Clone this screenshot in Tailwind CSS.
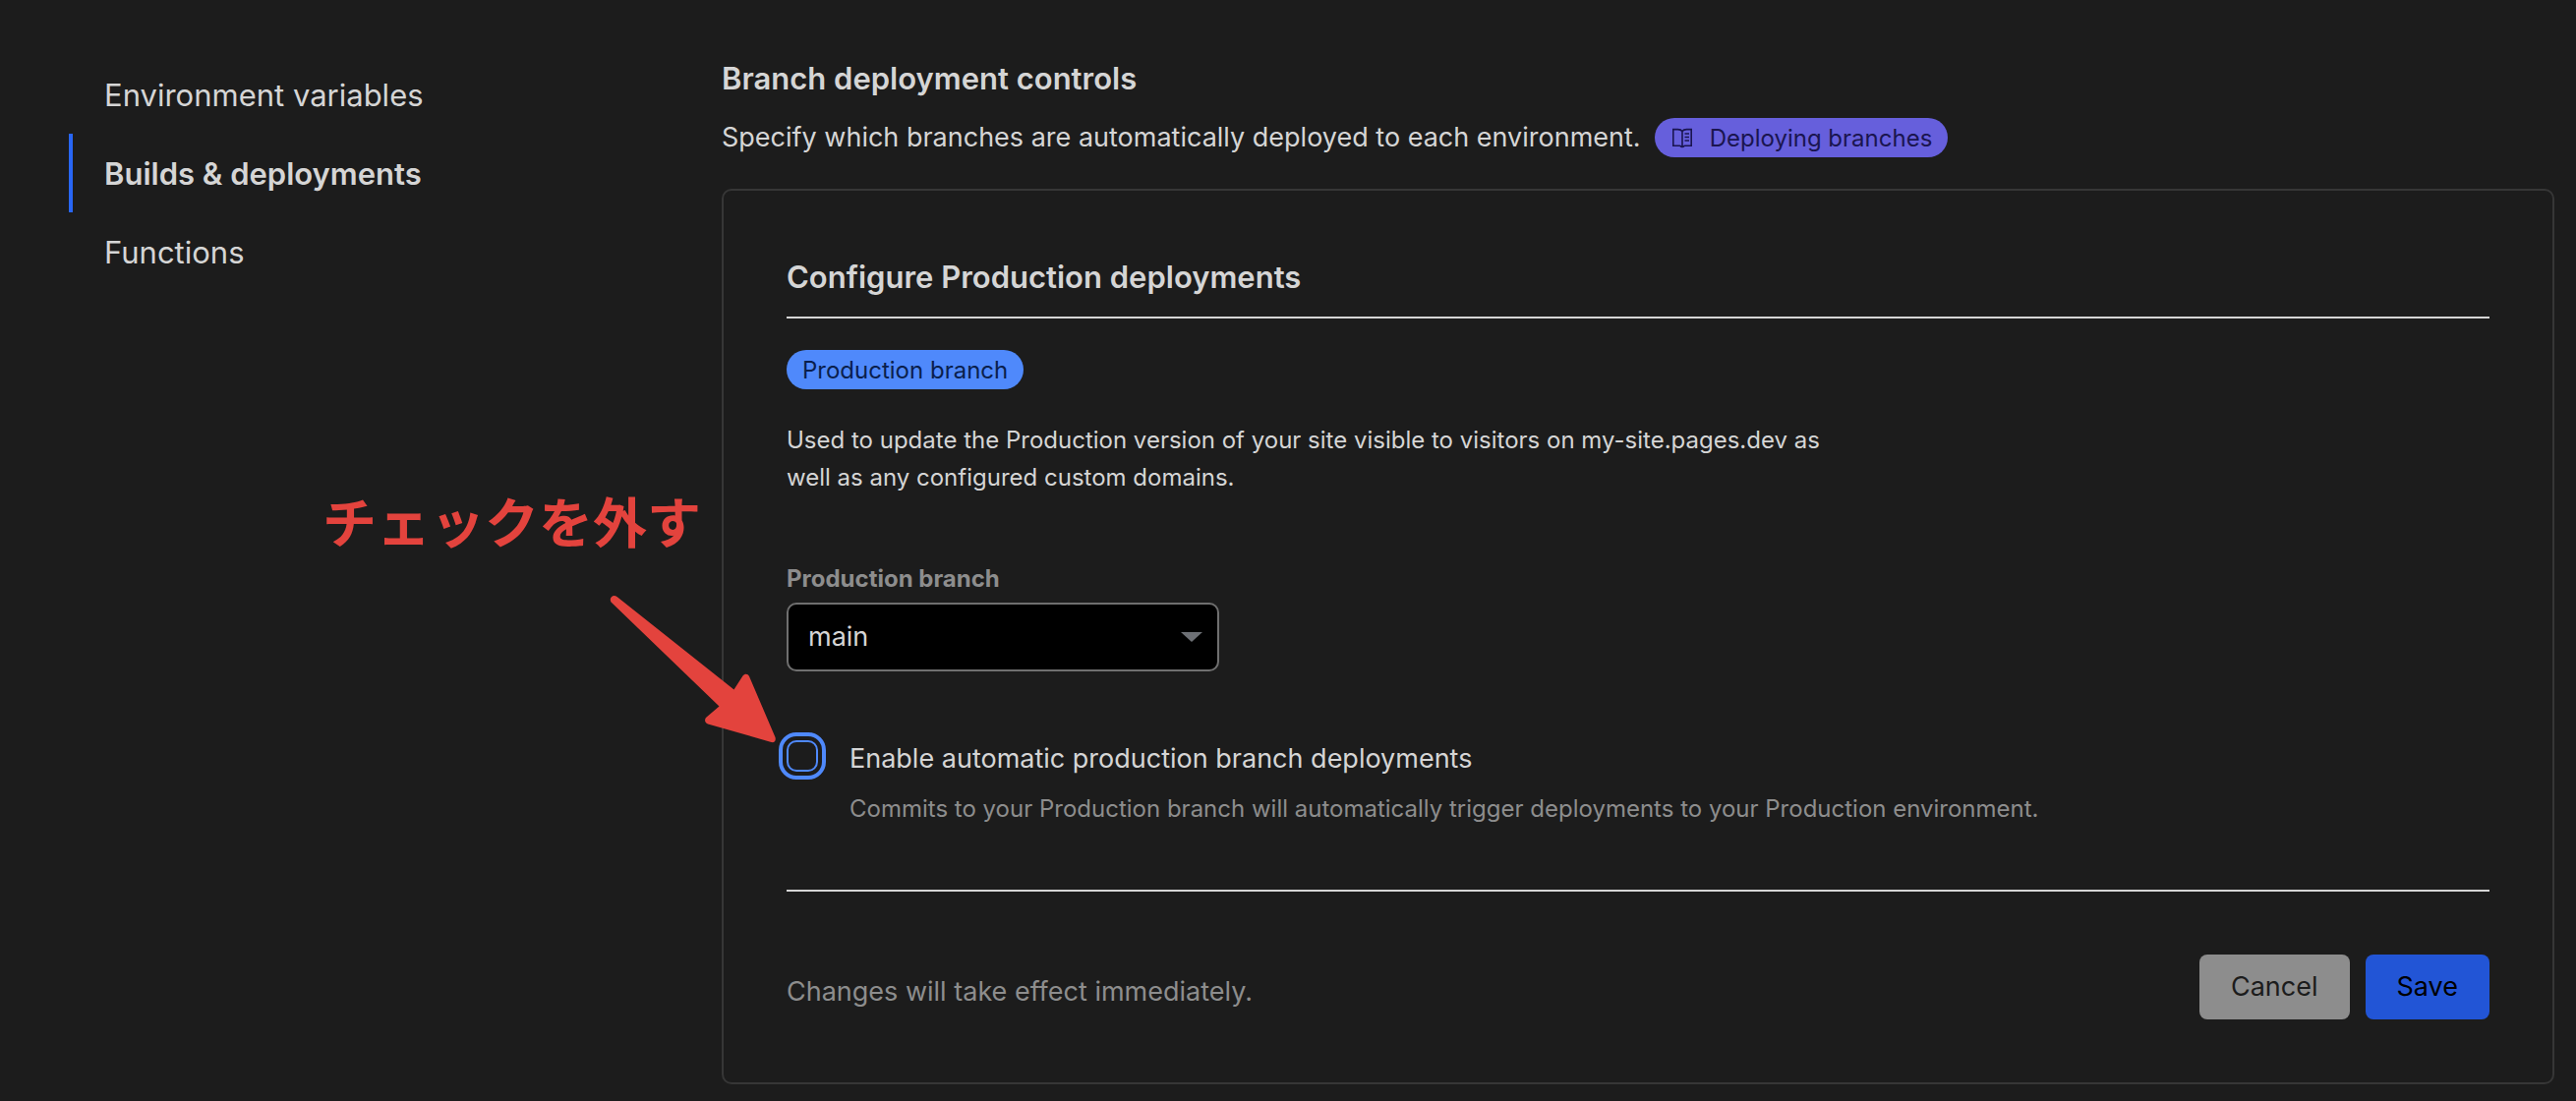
<!DOCTYPE html>
<html lang="en">
<head>
<meta charset="utf-8">
<meta name="viewport" content="width=device-width, initial-scale=1">
<title>Builds &amp; deployments</title>
<script src="https://cdn.jsdelivr.net/npm/@tailwindcss/browser@4"></script>
</head>
<body class="min-h-screen bg-[#1c1c1c] font-[Inter,'Noto_Sans_CJK_JP',sans-serif] text-[#d5d5d5]">
<div class="relative flex pr-[22px] pl-[70px]">
  <nav class="w-[664px] shrink-0 pt-14 text-[31px] leading-[78px]">
    <ul>
      <li><a href="#" class="block border-l-4 border-transparent pt-0.5 pl-8">Environment variables</a></li>
      <li><a href="#" aria-current="page" class="block border-l-4 border-[#2866f5] pt-0.5 pl-8 font-semibold">Builds &amp; deployments</a></li>
      <li><a href="#" class="block border-l-4 border-transparent pt-0.5 pl-8">Functions</a></li>
    </ul>
  </nav>

  <main class="min-w-0 flex-1 pt-[60px] pb-4">
    <h1 class="text-[31px] leading-10 font-semibold">Branch deployment controls</h1>
    <div class="mt-5 flex items-center gap-3.5">
      <p class="text-[27px] leading-10">Specify which branches are automatically deployed to each environment.</p>
      <a href="#" class="flex h-10 items-center gap-4 rounded-full bg-[#665fdc] px-4 text-[24px] text-[#1a1550]">
        <svg class="h-6 w-6" viewBox="0 0 24 24" fill="none" stroke="currentColor" stroke-width="1.6" aria-hidden="true">
          <path d="M12 5.500C11 4 9.500 3.600 7.500 3.600H2.800V20.200H9.500C10.300 20.200 10.300 21.400 12 21.400S13.700 20.200 14.500 20.200H21.200V3.600H16.500C14.500 3.600 13 4 12 5.500ZM12 5.500V21"/>
          <path d="M14.500 8H19M14.500 11.500H19M14.500 15H19"/>
        </svg>
        <span class="pt-0.5 leading-[38px]">Deploying branches</span>
      </a>
    </div>

    <form class="mt-8 rounded-[10px] border-2 border-[#363636] px-16 pt-[68px] pb-16">
      <h2 class="border-b-2 border-[#d5d5d5] pb-5 text-[31px] leading-10 font-semibold">Configure Production deployments</h2>
      <div class="mt-8 flex">
        <span class="rounded-full bg-[#4f89fb] px-4 pt-0.5 text-[24px] leading-[38px] text-[#0a1f4d]">Production branch</span>
      </div>
      <p class="mt-[33px] max-w-[1080px] text-[24px] leading-[38px]">Used to update the Production version of your site visible to visitors on my-site.pages.dev as well as any configured custom domains.</p>

      <label for="branch" class="mt-16 block text-[24px] leading-10 font-bold text-[#8d8d8d]">Production branch</label>
      <div class="relative mt-1 w-[440px]">
        <select id="branch" class="block h-[70px] w-full appearance-none rounded-[10px] border-2 border-[#6f6f6f] bg-black px-5 text-[27px]">
          <option>main</option>
        </select>
        <svg class="pointer-events-none absolute top-[30px] right-[17px] h-[10px] w-[22px]" viewBox="0 0 22 10" fill="#6d7075" aria-hidden="true"><path d="M0 0H22L11 10Z"/></svg>
      </div>

      <div class="mt-[66px] flex items-start gap-8">
        <input id="auto" type="checkbox" class="mt-1 h-8 w-8 shrink-0 appearance-none rounded-[10px] border-2 border-[#4f89fb] outline-4 outline-offset-4 outline-[#4f89fb]" aria-describedby="auto-help">
        <div class="pt-[3px]">
          <label for="auto" class="block text-[27px] leading-10">Enable automatic production branch deployments</label>
          <p id="auto-help" class="mt-[11px] text-[24px] leading-10 text-[#8d8d8d]">Commits to your Production branch will automatically trigger deployments to your Production environment.</p>
        </div>
      </div>

      <div class="mt-[62px] flex items-center justify-between border-t-2 border-[#d5d5d5] pt-16 text-[27px]">
        <p class="mt-2.5 leading-10 text-[#8d8d8d]">Changes will take effect immediately.</p>
        <div class="flex gap-4 leading-[66px]">
          <button type="button" class="rounded-lg bg-[#8d8d8d] px-8 text-[#1c1c1c]">Cancel</button>
          <button type="submit" class="rounded-lg bg-[#2255d6] px-8 text-black">Save</button>
        </div>
      </div>
    </form>
  </main>

  <p lang="ja" class="absolute top-[492px] left-[328px] text-[55px] leading-[80px] font-bold whitespace-nowrap text-[#e3433d]">チェックを外す</p>
  <svg class="absolute top-[600px] left-[616px] h-40 w-44" viewBox="616 600 176 160" fill="#e3433d" aria-hidden="true">
    <path d="M621.500 612.500C619 608.500 623.500 604 627.500 607L746.500 701.500L755.500 687.500C757.500 685 760.500 685 762 688L788.500 750C789.500 753.500 787.500 755.800 784.500 755L720 736.500C716.500 735 716.500 732 718 730L731.500 718.500Z"/>
  </svg>
</div>
</body>
</html>
